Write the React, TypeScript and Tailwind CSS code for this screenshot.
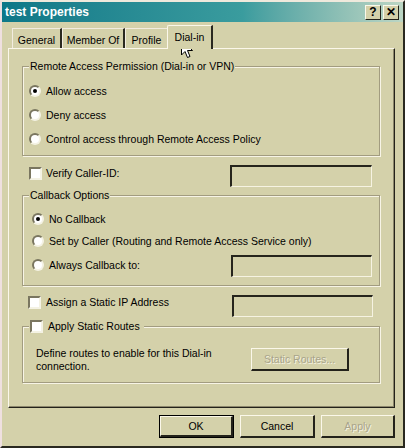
import React from "react";

const FONT = { fontFamily: '"Liberation Sans", Arial, sans-serif' };

function Radio({ checked = false }: { checked?: boolean }) {
  return (
    <span className="relative flex items-center justify-center w-[12px] h-[12px] shrink-0 rounded-full bg-white border-2 border-t-[#7a7660] border-l-[#7a7660] border-r-[#f4f2e4] border-b-[#f4f2e4]">
      {checked && <span className="w-[4px] h-[4px] rounded-full bg-black" />}
    </span>
  );
}

function Check() {
  return (
    <span className="w-[13px] h-[13px] shrink-0 bg-white border-2 border-t-[#7a7660] border-l-[#7a7660] border-r-[#f4f2e4] border-b-[#f4f2e4]" />
  );
}

function Field({ w = 140, h = 22 }: { w?: number; h?: number }) {
  return (
    <div
      className="border-t-2 border-l-2 border-t-[#26251c] border-l-[#26251c] border-r border-b border-r-[#f6f3e2] border-b-[#f6f3e2] bg-[#d4d1aa]"
      style={{ width: w, height: h }}
    />
  );
}

function Group({
  legend,
  h,
  children,
}: {
  legend: React.ReactNode;
  h: number;
  children: React.ReactNode;
}) {
  return (
    <div
      className="relative w-[358px] border border-[#a29c80] shadow-[1px_1px_0_#f7f4e6,inset_1px_1px_0_#f7f4e6]"
      style={{ height: h }}
    >
      <div className="absolute -top-[8px] left-[6px] px-[1px] bg-[#d4d1aa] flex items-center gap-[5px] h-[14px]">
        {legend}
      </div>
      {children}
    </div>
  );
}

function Tab({ label, w, active = false }: { label: string; w: number; active?: boolean }) {
  return active ? (
    <div
      className="relative z-10 h-[24px] -mb-[1px] -ml-[2px] flex items-start justify-center pt-[6px] bg-[#d4d1aa] border-l border-t border-[#fbf7ea] border-r-2 border-r-[#2a2920] rounded-tl-[2px]"
      style={{ width: w }}
    >
      {label}
    </div>
  ) : (
    <div
      className="h-[20px] flex items-center justify-center pt-[3px] border-t border-l border-[#f2ece0] border-r-2 border-r-[#2a2920]"
      style={{ width: w }}
    >
      {label}
    </div>
  );
}

function Btn({
  children,
  w,
  def = false,
  disabled = false,
}: {
  children: React.ReactNode;
  w: number;
  def?: boolean;
  disabled?: boolean;
}) {
  return (
    <div
      className={`h-[23px] flex items-center justify-center bg-[#d4d1aa] ${
        def ? "border border-black" : ""
      }`}
      style={{ width: w }}
    >
      <div className="w-full h-full flex items-center justify-center border-t border-l border-[#fbf8ea] border-r-2 border-b-2 border-r-[#23221a] border-b-[#23221a]">
        <span className={disabled ? "text-[#a8a48a] [text-shadow:1px_1px_0_#f6f3e2]" : ""}>
          {children}
        </span>
      </div>
    </div>
  );
}

function TitleBtn({ children }: { children: React.ReactNode }) {
  return (
    <div className="w-[16px] h-[15px] flex items-center justify-center bg-[#d4d1aa] border-t border-l border-[#fbf8ea] border-r border-b border-r-[#23221a] border-b-[#23221a] text-[12px] font-bold leading-none text-black">
      {children}
    </div>
  );
}

export default function App() {
  return (
    <div
      className="w-[405px] h-[448px] bg-[#d4d1aa] text-black text-[10.5px] leading-none overflow-hidden border-2 border-t-[#efe9dc] border-l-[#efe0e0] border-r-[#2a2920] border-b-[#2a2920] relative"
      style={FONT}
    >
      {/* Title */}
      <div className="h-[20px] flex items-center justify-between pl-[3px] pr-[4px] bg-gradient-to-r from-[#0d7888] via-[#3a9c9e] via-60% to-[#bcd6c4]">
        <span className="text-white font-bold text-[12px]">test Properties</span>
        <div className="flex gap-[2px]">
          <TitleBtn>?</TitleBtn>
          <TitleBtn>✕</TitleBtn>
        </div>
      </div>

      {/* Tabs */}
      <div className="mt-[4px] h-[22px] pl-[10px] flex items-end">
        <Tab label="General" w={50} />
        <Tab label="Member Of" w={63} />
        <Tab label="Profile" w={44} />
        <Tab label="Dial-in" w={46} active />
      </div>

      {/* Panel */}
      <div className="ml-[6px] w-[387px] h-[360px] border-l border-t border-[#fbf7ea] border-r border-b border-r-[#23221a] border-b-[#23221a] shadow-[inset_-1px_-1px_0_#8c876c] pl-[13px] pt-[17px] flex flex-col">
        <Group h={90} legend={<span>Remote Access Permission (Dial-in or VPN)</span>}>
          <div className="pt-[12px] pl-[6px] flex flex-col">
            <div className="h-[24px] flex items-center gap-[5px]">
              <Radio checked />
              <span>Allow access</span>
            </div>
            <div className="h-[24px] flex items-center gap-[5px]">
              <Radio />
              <span>Deny access</span>
            </div>
            <div className="h-[24px] flex items-center gap-[5px]">
              <Radio />
              <span>Control access through Remote Access Policy</span>
            </div>
          </div>
        </Group>

        <div className="mt-[9px] h-[22px] w-[350px] flex items-start justify-between">
          <div className="h-[16px] pl-[7px] flex items-center gap-[4px]">
            <Check />
            <span>Verify Caller-ID:</span>
          </div>
          <Field w={142} />
        </div>

        <div className="mt-[8px]">
          <Group h={91} legend={<span>Callback Options</span>}>
            <div className="pt-[12px] pl-[9px] pr-[7px] flex flex-col">
              <div className="h-[22px] flex items-center gap-[5px]">
                <Radio checked />
                <span>No Callback</span>
              </div>
              <div className="h-[22px] flex items-center gap-[5px]">
                <Radio />
                <span>Set by Caller (Routing and Remote Access Service only)</span>
              </div>
              <div className="mt-[3px] h-[22px] flex items-start justify-between">
                <div className="mt-[2px] h-[16px] flex items-center gap-[5px]">
                  <Radio />
                  <span>Always Callback to:</span>
                </div>
                <Field w={141} />
              </div>
            </div>
          </Group>
        </div>

        <div className="mt-[9px] h-[22px] w-[351px] flex items-start justify-between">
          <div className="h-[14px] pl-[6px] flex items-center gap-[5px]">
            <Check />
            <span>Assign a Static IP Address</span>
          </div>
          <Field w={141} />
        </div>

        <div className="mt-[9px]">
          <Group
            h={57}
            legend={
              <>
                <Check />
                <span className="pr-[3px]">Apply Static Routes</span>
              </>
            }
          >
            <div className="pt-[21px] pl-[13px] pr-[30px] flex items-start justify-between">
              <div className="leading-[13px] -mt-[1px]">
                Define routes to enable for this Dial-in
                <br />
                connection.
              </div>
              <div className="w-[98px] h-[23px] flex items-center justify-center border-t border-l border-[#fbf8ea] border-r-2 border-b-2 border-r-[#23221a] border-b-[#23221a]">
                <span className="text-[#a8a48a] [text-shadow:1px_1px_0_#f6f3e2]">Static Routes...</span>
              </div>
            </div>
          </Group>
        </div>
      </div>

      {/* Buttons */}
      <div className="mt-[7px] pr-[8px] flex justify-end gap-[6px]">
        <Btn w={75} def>OK</Btn>
        <Btn w={75}>Cancel</Btn>
        <Btn w={74} disabled>Apply</Btn>
      </div>

      {/* Mouse pointer */}
      <svg
        className="absolute left-[179px] top-[37px] pointer-events-none"
        width="13"
        height="20"
        viewBox="0 0 13 20"
      >
        <path
          d="M0.5 0.5 L0.5 16 L4 12.5 L6.5 18.5 L9 17.5 L6.5 11.5 L11.5 11.5 Z"
          fill="#fff"
          stroke="#000"
          strokeWidth="1"
          strokeLinejoin="miter"
        />
      </svg>
    </div>
  );
}
